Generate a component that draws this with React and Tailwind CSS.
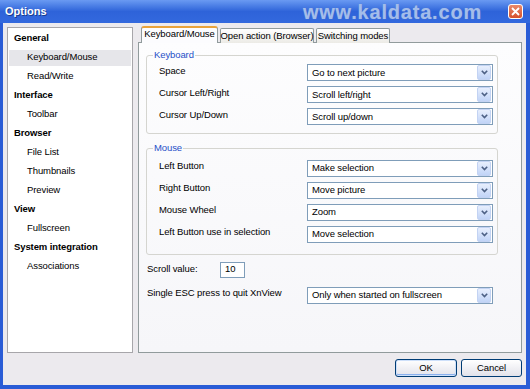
import React from 'react';

// tree on the left side of the dialog
const tree = [
    { label: 'General', head: true },
    { label: 'Keyboard/Mouse', selected: true },
    { label: 'Read/Write' },
    { label: 'Interface', head: true },
    { label: 'Toolbar' },
    { label: 'Browser', head: true },
    { label: 'File List' },
    { label: 'Thumbnails' },
    { label: 'Preview' },
    { label: 'View', head: true },
    { label: 'Fullscreen' },
    { label: 'System integration', head: true },
    { label: 'Associations' },
];

const keyboardRows = [
    ['Space', 'Go to next picture'],
    ['Cursor Left/Right', 'Scroll left/right'],
    ['Cursor Up/Down', 'Scroll up/down'],
];

const mouseRows = [
    ['Left Button', 'Make selection'],
    ['Right Button', 'Move picture'],
    ['Mouse Wheel', 'Zoom'],
    ['Left Button use in selection', 'Move selection'],
];

function Combo({ value }) {
    return (
        <div className="flex h-[17px] w-[186px] items-center border border-[#7F9DB9] bg-white">
            <span className="flex-1 truncate pl-[4px]">{value}</span>
            <span className="mr-px flex h-[15px] w-[14px] items-center justify-center rounded-[2px] border border-[#C3D3F3] bg-gradient-to-b from-[#E8EFFD] to-[#C1D4F7]">
                <svg width="7" height="5" viewBox="0 0 7 5">
                    <path d="M0.8 0.8 L3.5 3.6 L6.2 0.8" fill="none" stroke="#4D6185" strokeWidth="1.6" />
                </svg>
            </span>
        </div>
    );
}

function Group({ title, rows, className }) {
    return (
        <fieldset className={`ml-[7px] w-[352px] rounded-[3px] border border-[#D5D5D0] pl-[12px] pr-[4px] ${className}`}>
            <legend className="-ml-[6px] px-px text-[#1F4FC8]">{title}</legend>
            <div className="flex flex-col gap-[5px]">
                {rows.map(([label, value]) => (
                    <div key={label} className="flex h-[17px] items-center justify-between">
                        <span className="-mt-[3px]">{label}</span>
                        <Combo value={value} />
                    </div>
                ))}
            </div>
        </fieldset>
    );
}

export default function App() {
    return (
        <div className="flex h-[389px] w-[530px] flex-col overflow-hidden bg-[#2A5CD6] font-['Liberation_Sans',Arial,sans-serif] text-[9.5px] tracking-[-0.1px] text-black">
            {/* title bar */}
            <div className="flex h-[23px] items-center bg-gradient-to-b from-[#6A9AF2] via-[#2E63D9] to-[#3369DE] pl-[5px] pr-[7px]">
                <span className="text-[11px] font-bold tracking-normal text-white [text-shadow:1px_1px_0_#1A3C8C]">Options</span>
                <span className="ml-auto mr-[26px] text-[20px] font-bold tracking-[0.8px] text-[#A4BDEA] [text-shadow:0_0_1px_#5F85CF]">www.kaldata.com</span>
                <span className="flex h-[15px] w-[15px] items-center justify-center rounded-[3px] border border-white bg-gradient-to-b from-[#E9896A] to-[#D5502A]">
                    <svg width="9" height="9" viewBox="0 0 9 9">
                        <path d="M1 1 L8 8 M8 1 L1 8" stroke="white" strokeWidth="1.8" />
                    </svg>
                </span>
            </div>

            {/* body */}
            <div className="mb-[4px] ml-[3px] mr-[4px] flex flex-1 flex-col bg-[#ECEAEE] pl-[4px] pr-[4px] pt-[3px]">
                <div className="flex h-[327px] items-start gap-[5px]">
                    <div className="mt-px flex h-[326px] w-[126px] flex-col border border-[#A7A6AA] bg-white pt-px">
                        {tree.map((item) => (
                            <div key={item.label} className="flex h-[19px] items-center px-px">
                                <div
                                    className={`flex h-[16px] w-full items-center ${item.head ? 'pl-[5px] font-bold' : 'pl-[18px]'} ${item.selected ? 'bg-[#E6E6EA]' : ''}`}
                                >
                                    {item.label}
                                </div>
                            </div>
                        ))}
                    </div>

                    <div className="flex h-[327px] flex-1 flex-col">
                        {/* tabs */}
                        <div className="relative z-10 flex h-[17px] items-end gap-[2px] whitespace-nowrap pl-[3px]">
                            <div className="flex h-[17px] w-[77px] items-center justify-center rounded-t-[3px] border-x border-t-[2px] border-x-[#919B9C] border-t-[#E8A33C] bg-[#FCFCFE] pb-[2px]">
                                Keyboard/Mouse
                            </div>
                            <div className="flex h-[15px] w-[94px] items-center justify-center rounded-t-[2px] border border-b-0 border-[#919B9C] bg-gradient-to-b from-white to-[#ECEBE6]">
                                Open action (Browser)
                            </div>
                            <div className="flex h-[15px] w-[74px] items-center justify-center rounded-t-[2px] border border-b-0 border-[#919B9C] bg-gradient-to-b from-white to-[#ECEBE6]">
                                Switching modes
                            </div>
                        </div>

                        {/* tab page */}
                        <div className="-mt-px flex flex-1 flex-col border border-[#919B9C] bg-gradient-to-b from-[#FDFDFE] to-[#F6F6F9] pt-[5px]">
                            <Group title="Keyboard" rows={keyboardRows} className="pb-[8px] pt-[2px]" />
                            <Group title="Mouse" rows={mouseRows} className="mt-[7px] pb-[11px] pt-[4px]" />

                            <div className="mt-[7px] flex h-[16px] items-center pl-[8px]">
                                <span className="w-[73px]">Scroll value:</span>
                                <div className="flex h-[16px] w-[25px] items-center border border-[#7F9DB9] bg-white pl-[4px]">10</div>
                            </div>
                            <div className="mt-[9px] flex h-[17px] items-center pl-[8px]">
                                <span className="-mt-[3px] w-[160px]">Single ESC press to quit XnView</span>
                                <Combo value="Only when started on fullscreen" />
                            </div>
                        </div>
                    </div>
                </div>

                {/* buttons */}
                <div className="mt-[6px] flex justify-end gap-[4px]">
                    <button className="h-[18px] w-[62px] rounded-[3px] border border-[#003C74] bg-gradient-to-b from-white to-[#E2E2EA] shadow-[inset_0_0_0_1px_#CEE0FA,inset_0_-1px_0_1px_#8AB0EE]">
                        OK
                    </button>
                    <button className="h-[18px] w-[61px] rounded-[3px] border border-[#003C74] bg-gradient-to-b from-white to-[#E2E2EA]">
                        Cancel
                    </button>
                </div>
            </div>
        </div>
    );
}
